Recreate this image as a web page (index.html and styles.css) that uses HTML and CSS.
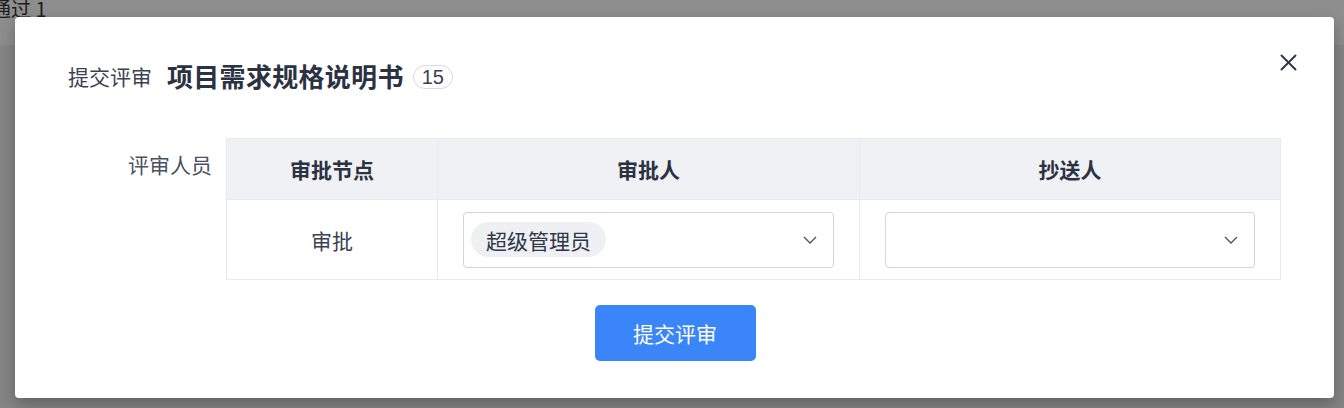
FILE: index.html
```html
<!DOCTYPE html>
<html lang="zh">
<head>
<meta charset="utf-8">
<link rel="stylesheet" href="styles.css">
</head>
<body>
<div class="page">
  <div class="page-top"><span class="page-top-text">通过 1</span></div>
  <div class="page-rest"></div>
</div>
<div class="dialog">
  <button class="close" aria-label="关闭">
    <svg width="17" height="17" viewBox="0 0 17 17"><path d="M1.5 1.5 L15.5 15.5 M15.5 1.5 L1.5 15.5" stroke="#323846" stroke-width="2" stroke-linecap="round" fill="none"/></svg>
  </button>
  <div class="dialog-head">
    <span class="head-label">提交评审</span>
    <span class="head-title">项目需求规格说明书</span>
    <span class="badge">15</span>
  </div>
  <div class="form-row">
    <div class="form-label">评审人员</div>
    <div class="table">
      <div class="th">审批节点</div>
      <div class="th">审批人</div>
      <div class="th">抄送人</div>
      <div class="td">审批</div>
      <div class="td">
        <div class="select">
          <span class="tag">超级管理员</span>
          <svg class="chev" width="14" height="8" viewBox="0 0 14 8"><path d="M1 1 L7 7 L13 1" stroke="#4a5060" stroke-width="1.3" fill="none"/></svg>
        </div>
      </div>
      <div class="td">
        <div class="select">
          <span></span>
          <svg class="chev" width="14" height="8" viewBox="0 0 14 8"><path d="M1 1 L7 7 L13 1" stroke="#4a5060" stroke-width="1.3" fill="none"/></svg>
        </div>
      </div>
    </div>
  </div>
  <div class="actions">
    <button class="submit">提交评审</button>
  </div>
</div>
</body>
</html>
```
FILE: styles.css
```css
* { box-sizing: border-box; }
html, body { margin: 0; padding: 0; }
body {
  width: 1344px;
  height: 408px;
  overflow: hidden;
  font-family: "Noto Sans CJK SC", "Noto Sans", sans-serif;
  background: #878787;
}
.page { display: flex; flex-direction: column; height: 408px; }
.page-top {
  height: 45px;
  background: #8e8e8e;
  color: #1e1e1e;
  font-family: "Noto Sans CJK SC", "Noto Sans", sans-serif;
  font-size: 20px;
  line-height: 22px;
}
.page-top-text { display: block; margin-left: -9px; margin-top: -2px; }
.page-rest { flex: 1; background: #858585; }

.dialog {
  position: absolute;
  left: 15px;
  top: 17px;
  width: 1319px;
  height: 381px;
  background: #fff;
  border-radius: 4px;
  box-shadow: 0 6px 16px rgba(0,0,0,0.28);
  padding: 40px 53px 37px 53px;
  display: flex;
  flex-direction: column;
}
.close {
  position: absolute;
  top: 37px;
  right: 37px;
  width: 17px;
  height: 17px;
  padding: 0;
  border: 0;
  background: none;
  display: flex;
}
.dialog-head {
  height: 38px;
  display: flex;
  align-items: center;
}
.head-label {
  font-size: 21px;
  color: #3a4152;
  margin-right: 15px;
}
.head-title {
  font-size: 26px;
  font-weight: 700;
  color: #2b3242;
  margin-right: 9px;
  letter-spacing: 0.3px;
}
.badge {
  font-family: "Liberation Sans", Arial, sans-serif;
  font-size: 20px;
  color: #3a4152;
  height: 24px;
  min-width: 38px;
  padding: 0 8px;
  border: 1px solid #d6d9e4;
  border-radius: 12px;
  display: flex;
  align-items: center;
  justify-content: center;
  margin-top: 3px;
}
.form-row {
  display: flex;
  margin-top: 44px;
}
.form-label {
  width: 158px;
  padding-right: 14px;
  text-align: right;
  font-size: 21px;
  color: #4a5162;
  line-height: 30px;
  padding-top: 11px;
}
.table {
  flex: 1;
  display: grid;
  grid-template-columns: 211px 422px 1fr;
  grid-template-rows: 61px 80px;
  border-top: 1px solid #e8eaee;
  border-left: 1px solid #e8eaee;
}
.th, .td {
  border-right: 1px solid #e8eaee;
  border-bottom: 1px solid #e8eaee;
  display: flex;
  align-items: center;
  justify-content: center;
  font-size: 21px;
}
.th {
  background: #f0f1f4;
  font-weight: 700;
  color: #2b3242;
}
.td { color: #3a4152; padding: 0 25px; }
.select {
  width: 100%;
  height: 56px;
  border: 1px solid #d0d4e2;
  border-radius: 4px;
  display: flex;
  align-items: center;
  justify-content: space-between;
  padding: 0 16px 0 7px;
}
.tag {
  height: 35px;
  padding: 0 15px;
  border-radius: 18px;
  background: #eef0f4;
  color: #2f3646;
  display: flex;
  align-items: center;
  font-size: 21px;
}
.chev { display: block; }
.actions {
  display: flex;
  justify-content: center;
  margin-top: 25px;
  padding-left: 1px;
}
.submit {
  width: 161px;
  height: 56px;
  border: 0;
  border-radius: 5px;
  background: #3a86f8;
  color: #fff;
  font-family: "Noto Sans CJK SC", sans-serif;
  font-size: 21px;
  padding: 0;
}
```
